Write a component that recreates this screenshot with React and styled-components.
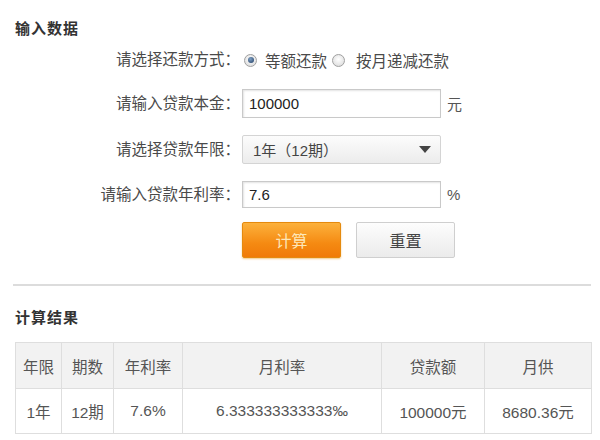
import React from 'react';
import styled, { createGlobalStyle } from 'styled-components';

const GlobalStyle = createGlobalStyle`
  body {
    margin: 0;
    background: #fff;
    font-family: "Liberation Sans", "Noto Sans CJK SC", sans-serif;
    color: #444;
  }
`;

const Page = styled.div`
  width: 600px;
  height: 440px;
  padding: 19px 9px 0 15px;
  box-sizing: border-box;
  overflow: hidden;
`;

const Heading = styled.h3`
  margin: 0;
  font-size: 15px;
  font-weight: bold;
  color: #333;
  line-height: 20px;
  letter-spacing: 1px;
`;

const Form = styled.div`
  display: grid;
  grid-template-columns: 227px auto;
  margin-top: 6px;
`;

const Label = styled.div`
  font-size: 15.5px;
  color: #4a4a4a;
  text-align: right;
  padding-right: 2px;
  height: ${(p) => p.h}px;
  line-height: ${(p) => p.h}px;
  margin-top: ${(p) => p.gap}px;
`;

const Field = styled.div`
  display: flex;
  align-items: center;
  height: ${(p) => p.h}px;
  margin-top: ${(p) => p.gap}px;
  font-size: 15.5px;
  color: #4a4a4a;
`;

const Radio = styled.span`
  width: 13px;
  height: 13px;
  border-radius: 50%;
  box-sizing: border-box;
  border: 1px solid #a0a0a0;
  background: radial-gradient(circle at 50% 40%, #fff 0%, #d6d6d6 100%);
  display: flex;
  align-items: center;
  justify-content: center;
  margin: 0 8px 0 ${(p) => p.ml}px;

  &::after {
    content: '';
    display: ${(p) => (p.checked ? 'block' : 'none')};
    width: 6px;
    height: 6px;
    border-radius: 50%;
    background: radial-gradient(circle at 40% 35%, #7fa0c4 0%, #1d3a60 100%);
  }
`;

const TextInput = styled.div`
  width: 199px;
  height: ${(p) => p.h}px;
  box-sizing: border-box;
  border: 1px solid #c9c9c9;
  box-shadow: inset 1px 1px 2px #e3e3e3;
  background: #fff;
  font-size: 15px;
  color: #222;
  padding-left: 6px;
  display: flex;
  align-items: center;
`;

const Unit = styled.span`
  margin-left: 6px;
  font-size: 15px;
  color: #555;
`;

const Select = styled.div`
  width: 199px;
  height: 29px;
  box-sizing: border-box;
  border: 1px solid #d4d4d4;
  border-radius: 2px;
  background: linear-gradient(#fcfcfc, #ececec);
  display: flex;
  align-items: center;
  justify-content: space-between;
  padding: 0 9px 0 10px;
  font-size: 15px;
  color: #444;
`;

const Arrow = styled.span`
  width: 0;
  height: 0;
  border-left: 6px solid transparent;
  border-right: 6px solid transparent;
  border-top: 7px solid #444;
`;

const Button = styled.div`
  width: 99px;
  height: 36px;
  box-sizing: border-box;
  border-radius: 2px;
  display: flex;
  align-items: center;
  justify-content: center;
  font-size: 16px;
  margin-right: 15px;
  border: 1px solid ${(p) => (p.primary ? '#e58a0e' : '#cfcfcf')};
  background: ${(p) =>
    p.primary
      ? 'linear-gradient(#fcb13c, #f58a12 60%, #f07a08)'
      : 'linear-gradient(#fdfdfd, #ebebeb)'};
  color: ${(p) => (p.primary ? '#fde7b8' : '#444')};
  box-shadow: ${(p) => (p.primary ? '0 1px 2px #f3c98a' : 'none')};
`;

const Divider = styled.hr`
  border: none;
  border-top: 2px solid #dcdcdc;
  margin: 26px 0 0 -2px;
`;

const ResultHeading = styled(Heading)`
  margin-top: 22px;
`;

const Table = styled.table`
  margin-top: 14px;
  border-collapse: collapse;
  width: 576px;
  table-layout: fixed;
  font-size: 15.5px;
  color: #555;

  th,
  td {
    border: 1px solid #dedede;
    text-align: center;
    font-weight: normal;
    padding: 0;
  }
  th {
    height: 45px;
    background: #f2f2f2;
  }
  td {
    height: 44px;
    background: #fff;
  }
`;

const cols = [46, 52, 69, 199, 103, 107];

export default function App() {
  return (
    <Page>
      <GlobalStyle />
      <Heading>输入数据</Heading>
      <Form>
        <Label h={30} gap={0}>请选择还款方式：</Label>
        <Field h={30} gap={0}>
          <Radio checked ml={2} />
          <span>等额还款</span>
          <Radio ml={5} />
          <span style={{ marginLeft: 3 }}>按月递减还款</span>
        </Field>

        <Label h={29} gap={14}>请输入贷款本金：</Label>
        <Field h={29} gap={14}>
          <TextInput h={29}>100000</TextInput>
          <Unit>元</Unit>
        </Field>

        <Label h={29} gap={17}>请选择贷款年限：</Label>
        <Field h={29} gap={17}>
          <Select>
            <span>1年（12期）</span>
            <Arrow />
          </Select>
        </Field>

        <Label h={27} gap={17}>请输入贷款年利率：</Label>
        <Field h={27} gap={17}>
          <TextInput h={27}>7.6</TextInput>
          <Unit>%</Unit>
        </Field>

        <div />
        <Field h={36} gap={14}>
          <Button primary>计算</Button>
          <Button>重置</Button>
        </Field>
      </Form>

      <Divider />
      <ResultHeading>计算结果</ResultHeading>
      <Table>
        <colgroup>
          {cols.map((w, i) => (
            <col key={i} style={{ width: w }} />
          ))}
        </colgroup>
        <thead>
          <tr>
            <th>年限</th>
            <th>期数</th>
            <th>年利率</th>
            <th>月利率</th>
            <th>贷款额</th>
            <th>月供</th>
          </tr>
        </thead>
        <tbody>
          <tr>
            <td>1年</td>
            <td>12期</td>
            <td>7.6%</td>
            <td>6.333333333333‰</td>
            <td>100000元</td>
            <td>8680.36元</td>
          </tr>
        </tbody>
      </Table>
    </Page>
  );
}
